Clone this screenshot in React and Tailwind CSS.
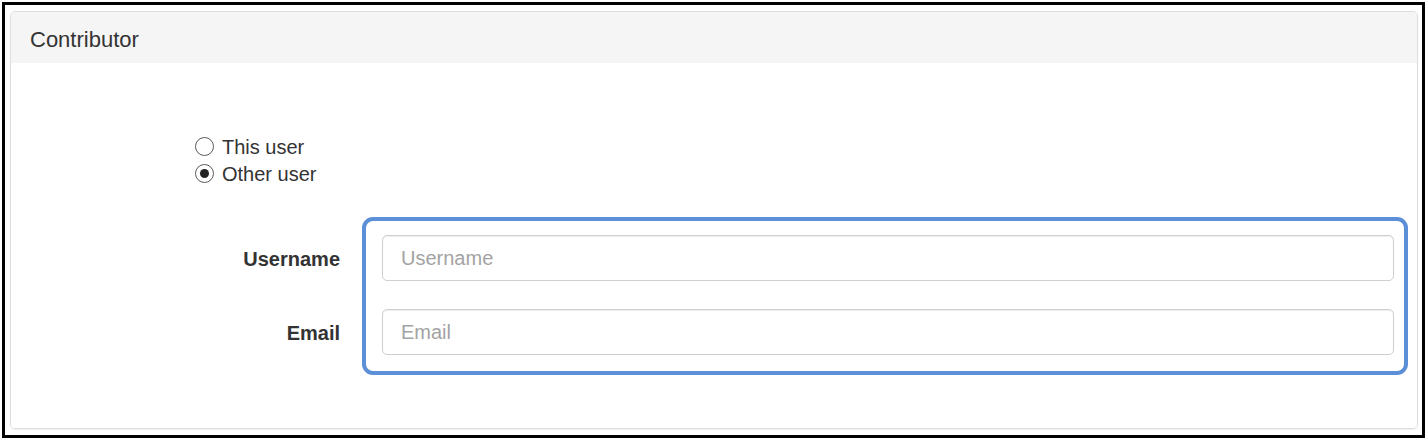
const Radio = ({ checked, label }) => (
    <label className="flex items-center h-[27px] text-[20px] text-[#333]">
        <span className="w-[19px] h-[19px] rounded-full border-[1.5px] border-[#5a5a5a] bg-white flex items-center justify-center mr-[8px]">
            {checked && <span className="w-[9px] h-[9px] rounded-full bg-[#222]" />}
        </span>
        {label}
    </label>
);

const Field = ({ placeholder }) => (
    <input
        type="text"
        placeholder={placeholder}
        className="h-[46px] w-full rounded-[5px] border border-[#cfcfcf] bg-white px-[18px] text-[20px] text-[#555] placeholder:text-[#a3a3a3] shadow-[inset_0_1px_1px_rgba(0,0,0,0.075)] outline-none"
    />
);

export default function App() {
    return (
        <div className="w-[1428px] h-[440px] bg-white pt-[2px] pl-[2px] pr-[3px] pb-[2px] font-['Liberation_Sans',Arial,sans-serif]">
            <div className="h-full border-[3px] border-black pt-[6px] pl-[5px] pr-[4px] pb-[6px]">
                <div className="h-full flex flex-col rounded-[5px] border border-[#dddddd] shadow-[0_1px_2px_rgba(0,0,0,0.06)] overflow-hidden">
                    <div className="h-[51px] shrink-0 bg-[#f5f5f5] flex items-center pt-[4px] px-[19px] text-[22px] text-[#333]">
                        Contributor
                    </div>

                    <div className="flex-1 bg-white">
                        <div className="pt-[70px] pl-[184px] flex flex-col">
                            <Radio label="This user" />
                            <Radio label="Other user" checked />
                        </div>

                        <div className="mt-[30px] flex">
                            <div className="w-[329px] pt-[18px] flex flex-col gap-[28px]">
                                <div className="h-[46px] flex items-center justify-end pt-[2px] text-[20px] font-bold text-[#333]">Username</div>
                                <div className="h-[46px] flex items-center justify-end pt-[2px] text-[20px] font-bold text-[#333]">Email</div>
                            </div>

                            <div className="ml-[22px] w-[1046px] rounded-[11px] border-4 border-[#5b8fd7] pt-[14px] pb-[16px] pl-[16px] pr-[10px] flex flex-col gap-[28px]">
                                <Field placeholder="Username" />
                                <Field placeholder="Email" />
                            </div>
                        </div>
                    </div>
                </div>
            </div>
        </div>
    );
}
